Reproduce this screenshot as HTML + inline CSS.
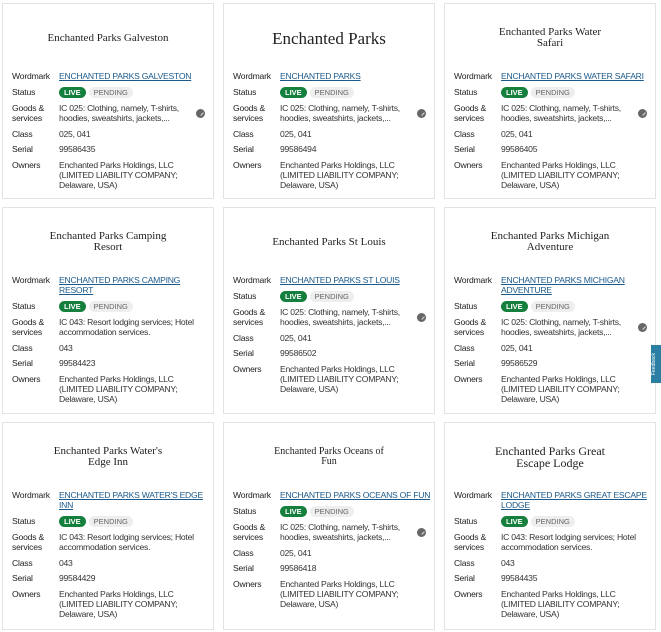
<html><head><style>
body{margin:0;width:661px;height:632px;background:#fff;position:relative;overflow:hidden;font-family:"Liberation Sans",sans-serif;}
.c{position:absolute;width:212px;border:1px solid #e3e3e3;box-sizing:border-box;}
.t{position:absolute;left:0;right:0;top:16px;height:36px;display:flex;align-items:center;justify-content:center;text-align:center;font-family:"Liberation Serif",serif;font-size:11px;line-height:11px;color:#222;padding:0 10px;white-space:nowrap}
.rows{position:absolute;left:9px;top:67px;right:4px;font-size:8.6px;line-height:10px;color:#333;letter-spacing:-0.25px;white-space:nowrap}
.r{display:flex;margin-bottom:5.5px;position:relative}
.l{width:47px;flex:none;color:#222;letter-spacing:-.2px}
.v{flex:1}
a{color:#1c5a8c;text-decoration:underline;}
.live{display:inline-block;background:#15803d;color:#fff;border-radius:6px;padding:1px 5px;font-size:7.5px;font-weight:bold;line-height:9px;letter-spacing:0}
.pend{display:inline-block;background:#eee;color:#666;border-radius:6px;padding:1px 5px;font-size:7.5px;line-height:9px;margin-left:3px;letter-spacing:0}
.ic{position:absolute;right:4px;top:6px;width:9px;height:9px;border-radius:50%;background:#666}
.ic:after{content:"";position:absolute;left:3px;top:2px;width:3px;height:4px;border:1px solid #ddd;border-width:0 1px 0 0;transform:rotate(45deg)}
</style></head><body>

<div class="c" style="left:2px;top:3px;height:196px"><div class="t">Enchanted Parks Galveston</div><div class="rows">
<div class="r"><div class="l">Wordmark</div><div class="v"><a>ENCHANTED PARKS GALVESTON</a></div></div>
<div class="r"><div class="l">Status</div><div class="v"><span class="live">LIVE</span><span class="pend">PENDING</span></div></div>
<div class="r"><div class="l">Goods &amp;<br>services</div><div class="v">IC 025: Clothing, namely, T-shirts,<br>hoodies, sweatshirts, jackets,...</div><span class="ic"></span></div>
<div class="r"><div class="l">Class</div><div class="v">025, 041</div></div>
<div class="r"><div class="l">Serial</div><div class="v">99586435</div></div>
<div class="r"><div class="l">Owners</div><div class="v">Enchanted Parks Holdings, LLC<br>(LIMITED LIABILITY COMPANY;<br>Delaware, USA)</div></div></div></div>

<div class="c" style="left:223px;top:3px;height:196px"><div class="t" style="font-size:17px">Enchanted Parks</div><div class="rows">
<div class="r"><div class="l">Wordmark</div><div class="v"><a>ENCHANTED PARKS</a></div></div>
<div class="r"><div class="l">Status</div><div class="v"><span class="live">LIVE</span><span class="pend">PENDING</span></div></div>
<div class="r"><div class="l">Goods &amp;<br>services</div><div class="v">IC 025: Clothing, namely, T-shirts,<br>hoodies, sweatshirts, jackets,...</div><span class="ic"></span></div>
<div class="r"><div class="l">Class</div><div class="v">025, 041</div></div>
<div class="r"><div class="l">Serial</div><div class="v">99586494</div></div>
<div class="r"><div class="l">Owners</div><div class="v">Enchanted Parks Holdings, LLC<br>(LIMITED LIABILITY COMPANY;<br>Delaware, USA)</div></div></div></div>

<div class="c" style="left:444px;top:3px;height:196px"><div class="t">Enchanted Parks Water<br>Safari</div><div class="rows">
<div class="r"><div class="l">Wordmark</div><div class="v"><a>ENCHANTED PARKS WATER SAFARI</a></div></div>
<div class="r"><div class="l">Status</div><div class="v"><span class="live">LIVE</span><span class="pend">PENDING</span></div></div>
<div class="r"><div class="l">Goods &amp;<br>services</div><div class="v">IC 025: Clothing, namely, T-shirts,<br>hoodies, sweatshirts, jackets,...</div><span class="ic"></span></div>
<div class="r"><div class="l">Class</div><div class="v">025, 041</div></div>
<div class="r"><div class="l">Serial</div><div class="v">99586405</div></div>
<div class="r"><div class="l">Owners</div><div class="v">Enchanted Parks Holdings, LLC<br>(LIMITED LIABILITY COMPANY;<br>Delaware, USA)</div></div></div></div>

<div class="c" style="left:2px;top:207px;height:207px"><div class="t">Enchanted Parks Camping<br>Resort</div><div class="rows">
<div class="r"><div class="l">Wordmark</div><div class="v"><a>ENCHANTED PARKS CAMPING<br>RESORT</a></div></div>
<div class="r"><div class="l">Status</div><div class="v"><span class="live">LIVE</span><span class="pend">PENDING</span></div></div>
<div class="r"><div class="l">Goods &amp;<br>services</div><div class="v">IC 043: Resort lodging services; Hotel<br>accommodation services.</div></div>
<div class="r"><div class="l">Class</div><div class="v">043</div></div>
<div class="r"><div class="l">Serial</div><div class="v">99584423</div></div>
<div class="r"><div class="l">Owners</div><div class="v">Enchanted Parks Holdings, LLC<br>(LIMITED LIABILITY COMPANY;<br>Delaware, USA)</div></div></div></div>

<div class="c" style="left:223px;top:207px;height:207px"><div class="t">Enchanted Parks St Louis</div><div class="rows">
<div class="r"><div class="l">Wordmark</div><div class="v"><a>ENCHANTED PARKS ST LOUIS</a></div></div>
<div class="r"><div class="l">Status</div><div class="v"><span class="live">LIVE</span><span class="pend">PENDING</span></div></div>
<div class="r"><div class="l">Goods &amp;<br>services</div><div class="v">IC 025: Clothing, namely, T-shirts,<br>hoodies, sweatshirts, jackets,...</div><span class="ic"></span></div>
<div class="r"><div class="l">Class</div><div class="v">025, 041</div></div>
<div class="r"><div class="l">Serial</div><div class="v">99586502</div></div>
<div class="r"><div class="l">Owners</div><div class="v">Enchanted Parks Holdings, LLC<br>(LIMITED LIABILITY COMPANY;<br>Delaware, USA)</div></div></div></div>

<div class="c" style="left:444px;top:207px;height:207px"><div class="t">Enchanted Parks Michigan<br>Adventure</div><div class="rows">
<div class="r"><div class="l">Wordmark</div><div class="v"><a>ENCHANTED PARKS MICHIGAN<br>ADVENTURE</a></div></div>
<div class="r"><div class="l">Status</div><div class="v"><span class="live">LIVE</span><span class="pend">PENDING</span></div></div>
<div class="r"><div class="l">Goods &amp;<br>services</div><div class="v">IC 025: Clothing, namely, T-shirts,<br>hoodies, sweatshirts, jackets,...</div><span class="ic"></span></div>
<div class="r"><div class="l">Class</div><div class="v">025, 041</div></div>
<div class="r"><div class="l">Serial</div><div class="v">99586529</div></div>
<div class="r"><div class="l">Owners</div><div class="v">Enchanted Parks Holdings, LLC<br>(LIMITED LIABILITY COMPANY;<br>Delaware, USA)</div></div></div></div>

<div class="c" style="left:2px;top:422px;height:208px"><div class="t">Enchanted Parks Water's<br>Edge Inn</div><div class="rows">
<div class="r"><div class="l">Wordmark</div><div class="v"><a>ENCHANTED PARKS WATER'S EDGE<br>INN</a></div></div>
<div class="r"><div class="l">Status</div><div class="v"><span class="live">LIVE</span><span class="pend">PENDING</span></div></div>
<div class="r"><div class="l">Goods &amp;<br>services</div><div class="v">IC 043: Resort lodging services; Hotel<br>accommodation services.</div></div>
<div class="r"><div class="l">Class</div><div class="v">043</div></div>
<div class="r"><div class="l">Serial</div><div class="v">99584429</div></div>
<div class="r"><div class="l">Owners</div><div class="v">Enchanted Parks Holdings, LLC<br>(LIMITED LIABILITY COMPANY;<br>Delaware, USA)</div></div></div></div>

<div class="c" style="left:223px;top:422px;height:208px"><div class="t" style="font-size:10px;line-height:10px">Enchanted Parks Oceans of<br>Fun</div><div class="rows">
<div class="r"><div class="l">Wordmark</div><div class="v"><a>ENCHANTED PARKS OCEANS OF FUN</a></div></div>
<div class="r"><div class="l">Status</div><div class="v"><span class="live">LIVE</span><span class="pend">PENDING</span></div></div>
<div class="r"><div class="l">Goods &amp;<br>services</div><div class="v">IC 025: Clothing, namely, T-shirts,<br>hoodies, sweatshirts, jackets,...</div><span class="ic"></span></div>
<div class="r"><div class="l">Class</div><div class="v">025, 041</div></div>
<div class="r"><div class="l">Serial</div><div class="v">99586418</div></div>
<div class="r"><div class="l">Owners</div><div class="v">Enchanted Parks Holdings, LLC<br>(LIMITED LIABILITY COMPANY;<br>Delaware, USA)</div></div></div></div>

<div class="c" style="left:444px;top:422px;height:208px"><div class="t" style="font-size:12px;line-height:12px">Enchanted Parks Great<br>Escape Lodge</div><div class="rows">
<div class="r"><div class="l">Wordmark</div><div class="v"><a>ENCHANTED PARKS GREAT ESCAPE<br>LODGE</a></div></div>
<div class="r"><div class="l">Status</div><div class="v"><span class="live">LIVE</span><span class="pend">PENDING</span></div></div>
<div class="r"><div class="l">Goods &amp;<br>services</div><div class="v">IC 043: Resort lodging services; Hotel<br>accommodation services.</div></div>
<div class="r"><div class="l">Class</div><div class="v">043</div></div>
<div class="r"><div class="l">Serial</div><div class="v">99584435</div></div>
<div class="r"><div class="l">Owners</div><div class="v">Enchanted Parks Holdings, LLC<br>(LIMITED LIABILITY COMPANY;<br>Delaware, USA)</div></div></div></div>

<div style="position:absolute;left:651px;top:345px;width:12px;height:38px;background:#2b7fa3;border-radius:2px 0 0 2px;color:#fff;font-size:5px;writing-mode:vertical-rl;transform:rotate(180deg);text-align:center">Feedback</div>
</body></html>
